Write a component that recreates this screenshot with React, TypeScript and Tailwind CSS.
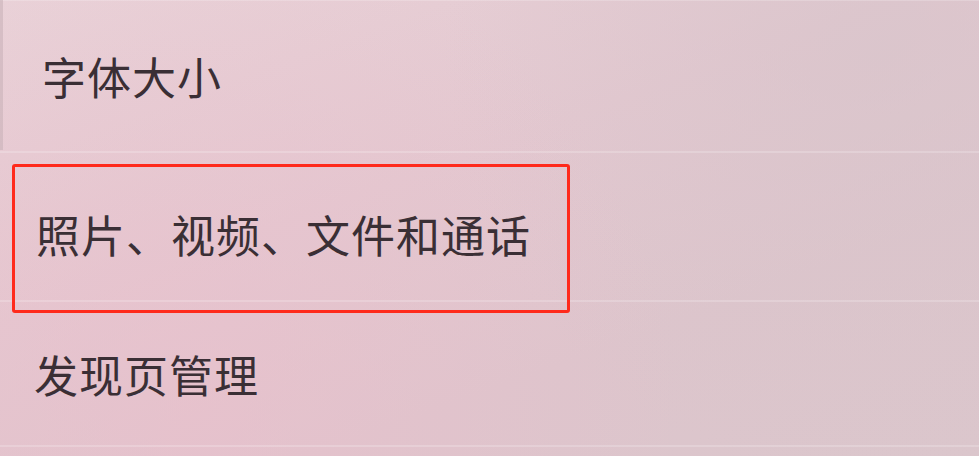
import React from "react";

const rows = [
  { label: "字体大小", className: "h-[150px] pl-[42px] pt-[0px]" },
  { label: "照片、视频、文件和通话", className: "h-[147px] pl-[36px] pt-[14px]" },
  { label: "发现页管理", className: "h-[143px] pl-[34px] pt-[0px]" },
];

export default function App() {
  return (
    <main
      className="relative h-[456px] w-[979px] overflow-hidden bg-[linear-gradient(160deg,#e9d2d8_0%,#e3c8d0_40%,#ddc5cc_70%,#dbc6cc_100%)] text-[#3a2f35]"
      style={{ fontFamily: '"Noto Sans CJK SC", "Noto Sans", sans-serif' }}
    >
      <div className="pointer-events-none absolute inset-0 bg-[radial-gradient(circle_at_20%_90%,rgba(236,190,204,0.55),transparent_55%),radial-gradient(circle_at_90%_10%,rgba(214,196,202,0.6),transparent_45%)]" />

      <div className="relative flex flex-col">
        <div className="h-px w-full bg-white/20" />
        {rows.map((row) => (
          <div key={row.label} className="flex flex-col">
            <div className={`flex items-center ${row.className}`}>
              <span className="text-[44px] font-normal leading-none tracking-[1px]">
                {row.label}
              </span>
            </div>
            <div className="h-[2px] w-full bg-white/20" />
          </div>
        ))}
      </div>

      <div className="absolute left-0 top-0 h-[150px] w-[3px] bg-[#c9b3b9]/60" />

      <div className="absolute left-[12px] top-[164px] h-[149px] w-[558px] rounded-[3px] border-[3px] border-[#ff2a1c]" />
    </main>
  );
}
